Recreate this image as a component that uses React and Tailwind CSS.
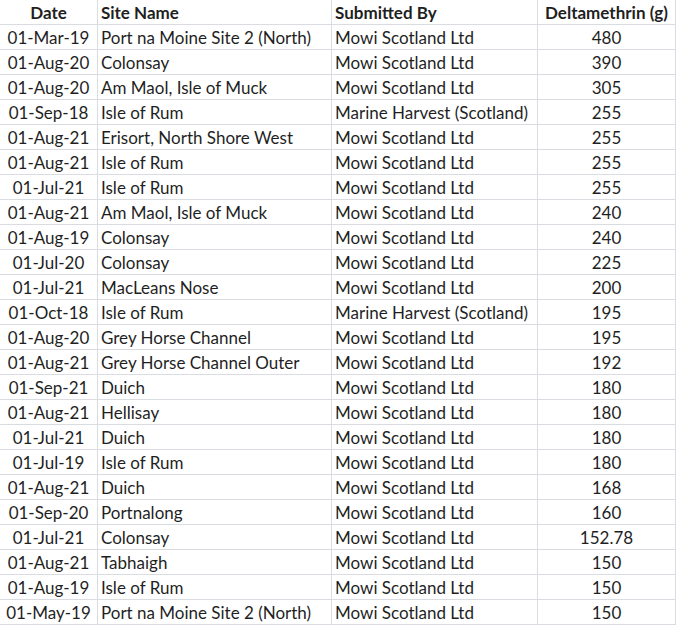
const ROWS = [
  ["01-Mar-19", "Port na Moine Site 2 (North)", "Mowi Scotland Ltd", "480"],
  ["01-Aug-20", "Colonsay", "Mowi Scotland Ltd", "390"],
  ["01-Aug-20", "Am Maol, Isle of Muck", "Mowi Scotland Ltd", "305"],
  ["01-Sep-18", "Isle of Rum", "Marine Harvest (Scotland)", "255"],
  ["01-Aug-21", "Erisort, North Shore West", "Mowi Scotland Ltd", "255"],
  ["01-Aug-21", "Isle of Rum", "Mowi Scotland Ltd", "255"],
  ["01-Jul-21", "Isle of Rum", "Mowi Scotland Ltd", "255"],
  ["01-Aug-21", "Am Maol, Isle of Muck", "Mowi Scotland Ltd", "240"],
  ["01-Aug-19", "Colonsay", "Mowi Scotland Ltd", "240"],
  ["01-Jul-20", "Colonsay", "Mowi Scotland Ltd", "225"],
  ["01-Jul-21", "MacLeans Nose", "Mowi Scotland Ltd", "200"],
  ["01-Oct-18", "Isle of Rum", "Marine Harvest (Scotland)", "195"],
  ["01-Aug-20", "Grey Horse Channel", "Mowi Scotland Ltd", "195"],
  ["01-Aug-21", "Grey Horse Channel Outer", "Mowi Scotland Ltd", "192"],
  ["01-Sep-21", "Duich", "Mowi Scotland Ltd", "180"],
  ["01-Aug-21", "Hellisay", "Mowi Scotland Ltd", "180"],
  ["01-Jul-21", "Duich", "Mowi Scotland Ltd", "180"],
  ["01-Jul-19", "Isle of Rum", "Mowi Scotland Ltd", "180"],
  ["01-Aug-21", "Duich", "Mowi Scotland Ltd", "168"],
  ["01-Sep-20", "Portnalong", "Mowi Scotland Ltd", "160"],
  ["01-Jul-21", "Colonsay", "Mowi Scotland Ltd", "152.78"],
  ["01-Aug-21", "Tabhaigh", "Mowi Scotland Ltd", "150"],
  ["01-Aug-19", "Isle of Rum", "Mowi Scotland Ltd", "150"],
  ["01-May-19", "Port na Moine Site 2 (North)", "Mowi Scotland Ltd", "150"],
];

const cell = "h-[25px] flex items-center border-r border-b border-[#d9dce1] whitespace-nowrap overflow-hidden";

export default function App() {
  return (
    <div className="w-[677px] h-[629px] bg-white text-[#1f1f1f] text-[17px] leading-none font-['Lato',sans-serif]">
      <div className="grid grid-cols-[98px_234px_206px_138px]">
        <div className={`${cell} justify-center font-bold`}>Date</div>
        <div className={`${cell} pl-[3px] font-bold`}>Site Name</div>
        <div className={`${cell} pl-[3px] font-bold`}>Submitted By</div>
        <div className={`${cell} justify-center font-bold`}>Deltamethrin (g)</div>
        {ROWS.map((r, i) => (
          <div key={i} className="contents">
            <div className={`${cell} justify-center`}>{r[0]}</div>
            <div className={`${cell} pl-[3px]`}>{r[1]}</div>
            <div className={`${cell} pl-[3px]`}>{r[2]}</div>
            <div className={`${cell} justify-center`}>{r[3]}</div>
          </div>
        ))}
      </div>
    </div>
  );
}
